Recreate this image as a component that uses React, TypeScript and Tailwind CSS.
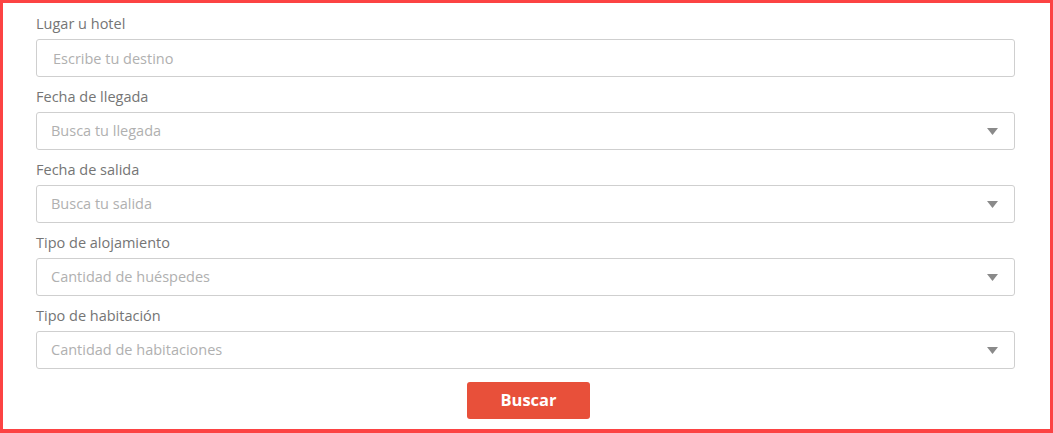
const fields = [
  { label: "Lugar u hotel", placeholder: "Escribe tu destino", select: false },
  { label: "Fecha de llegada", placeholder: "Busca tu llegada", select: true },
  { label: "Fecha de salida", placeholder: "Busca tu salida", select: true },
  { label: "Tipo de alojamiento", placeholder: "Cantidad de huéspedes", select: true },
  { label: "Tipo de habitación", placeholder: "Cantidad de habitaciones", select: true },
];

function Caret() {
  return (
    <svg aria-hidden="true" className="h-[7px] w-[11px] fill-[#8a8a8a]" viewBox="0 0 11 7">
      <path d="M0 0h11L5.5 7z" />
    </svg>
  );
}

export default function App() {
  return (
    <div
      className="flex h-[433px] w-[1053px] flex-col border-[3px] border-b-4 border-[#fc4343] bg-white pl-[33px] pr-[35px] pt-[10px]"
      style={{ fontFamily: '"Open Sans", sans-serif' }}
    >
      <form className="flex flex-col">
        {fields.map((field, i) => (
          <div className={i < fields.length - 1 ? "mb-[9px]" : ""} key={field.label}>
            <label className="mb-[6px] block h-5 pt-px text-[14.5px] leading-5 text-[#757575]">
              {field.label}
            </label>
            <div
              className={
                field.select
                  ? "flex h-[38px] items-center justify-between rounded-[3px] border border-[#cfcfcf] pl-[14px] pr-[16px]"
                  : "flex h-[38px] items-center rounded-[3px] border border-[#cfcfcf] pl-[16px] pt-px"
              }
            >
              <span className="text-[14.5px] text-[#b0b0b0]">{field.placeholder}</span>
              {field.select ? <Caret /> : null}
            </div>
          </div>
        ))}
        <div className="mt-[13px] flex justify-center pl-[6px]">
          <button
            className="h-[37px] w-[123px] rounded-[3px] bg-[#e8503a] text-[16.5px] font-bold text-white"
            type="button"
          >
            Buscar
          </button>
        </div>
      </form>
    </div>
  );
}
